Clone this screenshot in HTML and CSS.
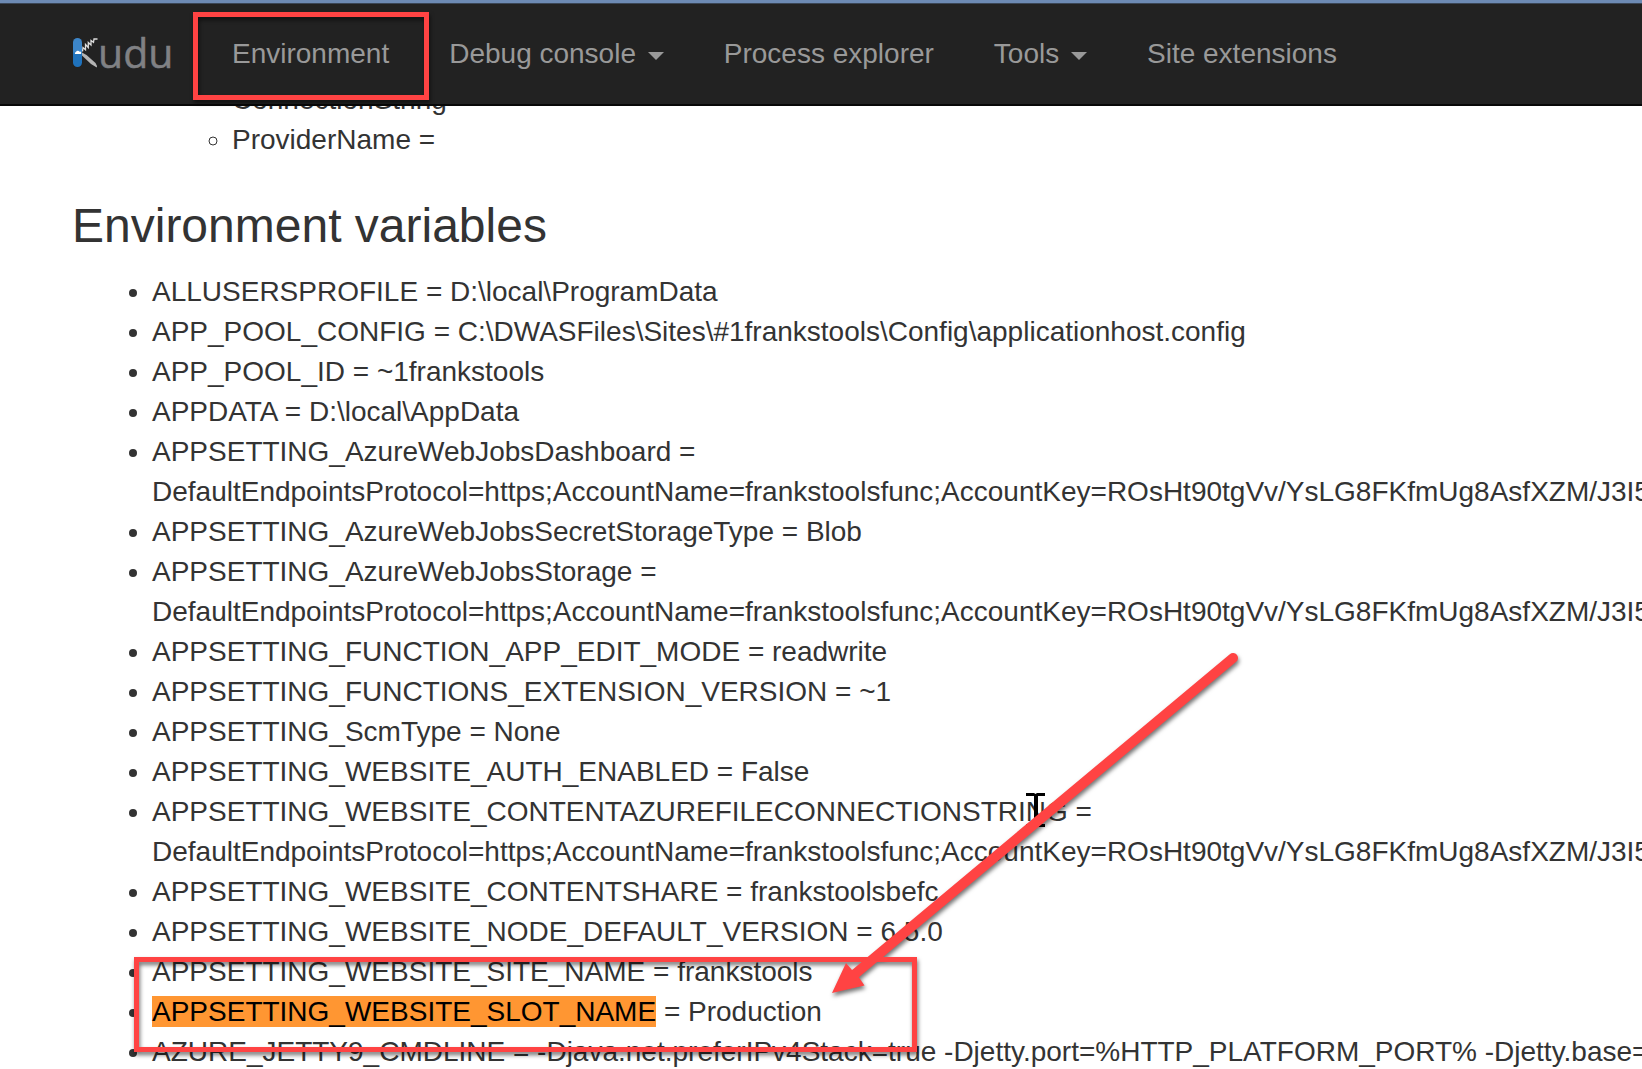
FILE: index.html
```html
<!DOCTYPE html>
<html lang="en">
<head>
<meta charset="utf-8">
<title>Kudu - Environment</title>
<link rel="stylesheet" href="styles.css">
</head>
<body>
<header class="navbar">
  <a class="brand" aria-label="Kudu">
    <svg class="brand-mark" width="26" height="32" viewBox="0 0 26 32">
      <defs><linearGradient id="g" x1="0" y1="0" x2="0" y2="1"><stop offset=".45" stop-color="#3c85c8"/><stop offset=".55" stop-color="#1f72bc"/></linearGradient></defs>
      <rect x="0" y="1" width="9" height="29" rx="4.5" fill="url(#g)"/>
      <path d="M9 15.500L13.500 18 22.500 26Q24.500 29 23.800 30.400L18 27 9 18.500Z" fill="#b5b5b5"/>
      <path d="M9.500 14.500L10 10.500 12.500 12.800 12.500 7.500 15.300 10.500 15.300 5.500 18 8 18 3.500 20.500 5.300 21 2 24.500 2" fill="none" stroke="#ddd" stroke-width="1.300"/>
      <path d="M2 17a1.400 1.400 0 0 1 1-2 2 2 0 0 1 3.500-.3 1.300 1.300 0 0 1 1.200 2.300Z" fill="#fff"/>
    </svg>
    <span class="brand-text">udu</span>
  </a>
  <nav class="menu">
    <a>Environment</a>
    <a>Debug console <b class="caret"></b></a>
    <a>Process explorer</a>
    <a>Tools <b class="caret"></b></a>
    <a>Site extensions</a>
  </nav>
</header>
<main class="container">
  <ul class="conn">
    <li class="nested"><ul>
      <li class="plain">ConnectionString</li>
      <li>ProviderName =</li>
    </ul></li>
  </ul>
  <h3>Environment variables</h3>
  <ul class="vars">
    <li>ALLUSERSPROFILE = D:\local\ProgramData</li>
    <li>APP_POOL_CONFIG = C:\DWASFiles\Sites\#1frankstools\Config\applicationhost.config</li>
    <li>APP_POOL_ID = ~1frankstools</li>
    <li>APPDATA = D:\local\AppData</li>
    <li>APPSETTING_AzureWebJobsDashboard =<br>DefaultEndpointsProtocol=https;AccountName=frankstoolsfunc;AccountKey=ROsHt90tgVv/YsLG8FKfmUg8AsfXZM/J3I5</li>
    <li>APPSETTING_AzureWebJobsSecretStorageType = Blob</li>
    <li>APPSETTING_AzureWebJobsStorage =<br>DefaultEndpointsProtocol=https;AccountName=frankstoolsfunc;AccountKey=ROsHt90tgVv/YsLG8FKfmUg8AsfXZM/J3I5</li>
    <li>APPSETTING_FUNCTION_APP_EDIT_MODE = readwrite</li>
    <li>APPSETTING_FUNCTIONS_EXTENSION_VERSION = ~1</li>
    <li>APPSETTING_ScmType = None</li>
    <li>APPSETTING_WEBSITE_AUTH_ENABLED = False</li>
    <li>APPSETTING_WEBSITE_CONTENTAZUREFILECONNECTIONSTRING =<br>DefaultEndpointsProtocol=https;AccountName=frankstoolsfunc;AccountKey=ROsHt90tgVv/YsLG8FKfmUg8AsfXZM/J3I5</li>
    <li>APPSETTING_WEBSITE_CONTENTSHARE = frankstoolsbefc</li>
    <li>APPSETTING_WEBSITE_NODE_DEFAULT_VERSION = 6.5.0</li>
    <li>APPSETTING_WEBSITE_SITE_NAME = frankstools</li>
    <li><mark>APPSETTING_WEBSITE_SLOT_NAME</mark> = Production</li>
    <li>AZURE_JETTY9_CMDLINE = -Djava.net.preferIPv4Stack=true -Djetty.port=%HTTP_PLATFORM_PORT% -Djetty.base=</li>
  </ul>
</main>
<svg class="overlay" width="1642" height="1069" viewBox="0 0 1642 1069">
  <path d="M1026 793h8l1.500 1 1.500-1h8v3h-7v28h7v3h-8l-1.500-1-1.500 1h-8v-3h8v-28h-8z" fill="#000"/>
  <g class="marks">
    <rect x="195.500" y="14.500" width="231" height="83"/>
    <rect x="136.500" y="959.500" width="778" height="90"/>
    <path class="shaft" d="M1233 658L855 974"/>
    <path class="head" d="M832 993L846 963 852 970 859 977.500 864.500 985.500Z"/>
  </g>
</svg>
</body>
</html>
```
FILE: styles.css
```css
* { box-sizing: border-box; }
html { overflow: hidden; }
body {
  margin: 0;
  height: 1069px;
  overflow: hidden;
  background: #fff;
  color: #333;
  font: 28px/40px "Liberation Sans", Arial, sans-serif;
}
.navbar {
  position: relative;
  z-index: 1;
  display: flex;
  height: 106px;
  padding: 30px 0 0 73px;
  background: #222;
  border-top: 3px solid #6d8ab4;
  border-bottom: 2px solid #080808;
  box-shadow: inset 0 1px #3b4656;
}
.brand { display: flex; width: 129px; padding-top: 4px; }
.brand-mark { flex: none; }
.brand-text {
  margin-left: -1px;
  color: #808184;
  font: 41px/40px "Open Sans", sans-serif;
  -webkit-text-stroke: .5px #808184;
  transform: translateY(-5px);
}
.menu { display: flex; white-space: nowrap; color: #999; }
.menu a { padding: 1px 30px 0; }
.caret {
  display: inline-block;
  margin-left: 4px;
  vertical-align: middle;
  border-top: 8px solid #999;
  border-left: 8px solid transparent;
  border-right: 8px solid transparent;
}
.container { padding-left: 72px; margin-top: -26px; white-space: nowrap; }
ul { margin: 0; padding-left: 80px; }
.nested, .plain { list-style: none; }
h3 { margin: 40px 0 20px; font-size: 48px; line-height: 52px; font-weight: 400; }
mark { background: #ff9632; color: #000; }
.overlay { position: absolute; z-index: 2; top: 0; left: 0; }
.marks { filter: drop-shadow(1px 3px 2px rgba(0, 0, 0, .55)); }
.marks rect { fill: none; stroke: #ff4343; stroke-width: 5; }
.shaft { stroke: #ff4343; stroke-width: 10; stroke-linecap: round; }
.head { fill: #ff4343; }
```
